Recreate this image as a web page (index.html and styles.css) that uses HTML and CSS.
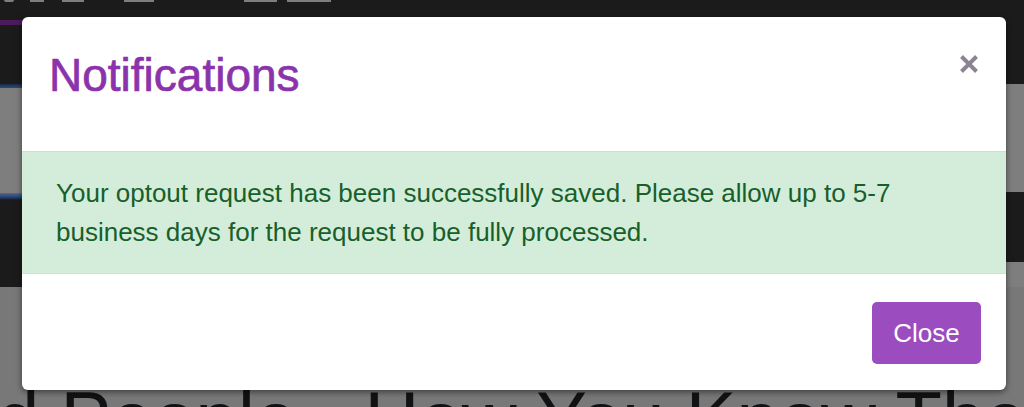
FILE: index.html
```html
<!DOCTYPE html>
<html lang="en">
<head>
<meta charset="utf-8">
<title>Notifications</title>
<link rel="stylesheet" href="styles.css">
</head>
<body>
<div class="page">
  <div class="top-band">
    <div class="hero-bits">
      <span class="bit b1"></span><span class="bit b2"></span><span class="bit b3"></span><span class="bit b4"></span><span class="bit b5"></span><span class="bit b6"></span>
    </div>
    <div class="purple-rule"></div>
  </div>
  <div class="mid">
    <div class="col-left">
      <div class="blue-rule"></div>
      <div class="gray g1"></div>
      <div class="blue-rule thick"></div>
      <div class="dark d1"></div>
    </div>
    <div class="col-right">
      <div class="gray g2"></div>
      <div class="dark d2"></div>
      <div class="gray g3"></div>
    </div>
  </div>
  <div class="bottom">
    <div class="headline">d People - How You Know The</div>
  </div>
</div>

<div class="modal">
  <div class="modal-header">
    <h4 class="modal-title">Notifications</h4>
    <button class="close" type="button" aria-label="Close">
      <svg width="18" height="18" viewBox="0 0 18 18"><path d="M1.5 1.5 L16.5 16.5 M16.5 1.5 L1.5 16.5" stroke="#8b8393" stroke-width="4" fill="none"/></svg>
    </button>
  </div>
  <div class="alert">Your optout request has been successfully saved. Please allow up to 5-7 business days for the request to be fully processed.</div>
  <div class="modal-footer">
    <button class="btn" type="button">Close</button>
  </div>
</div>
</body>
</html>
```

FILE: styles.css
```css
* { box-sizing: border-box; }
html, body { margin: 0; padding: 0; }
body {
  width: 1024px;
  height: 407px;
  overflow: hidden;
  font-family: "Liberation Sans", Arial, sans-serif;
  background: #7b7b7b;
}
.page {
  height: 407px;
  display: flex;
  flex-direction: column;
}
.top-band {
  height: 84px;
  background: #1b1b1b;
  display: flex;
  flex-direction: column;
}
.hero-bits {
  display: flex;
  height: 3px;
}
.bit { display: block; height: 2px; background: #7e7e7e; }
.b1 { width: 10px; margin-left: 4px; border-radius: 0 0 6px 6px; }
.b2 { width: 14px; margin-left: 16px; }
.b3 { width: 22px; margin-left: 18px; }
.b4 { width: 30px; margin-left: 40px; }
.b5 { width: 33px; margin-left: 90px; }
.b6 { width: 44px; margin-left: 10px; }
.purple-rule {
  margin-top: 17px;
  width: 300px;
  height: 5px;
  background: #4a1c5c;
}
.mid {
  display: flex;
  height: 203px;
}
.col-left, .col-right {
  flex: 1;
  display: flex;
  flex-direction: column;
}
.blue-rule {
  height: 4px;
  background: linear-gradient(#1b2a44, #2b4c7e);
}
.blue-rule.thick { height: 7px; background: linear-gradient(#556a8a, #23417a 60%, #1b1b1b); }
.gray { background: #7e7e7e; }
.dark { background: #1b1b1b; }
.g1 { height: 105px; }
.d1 { flex: 1; }
.g2 { height: 108px; }
.d2 { height: 70px; }
.g3 { flex: 1; }
.bottom {
  flex: 1;
  background: #787878;
  padding-top: 94px;
  overflow: hidden;
}
.headline {
  font-family: "Liberation Sans", Arial, sans-serif;
  font-size: 76px;
  line-height: 76px;
  color: #111214;
  white-space: nowrap;
  margin-left: -3px;
}

.modal {
  position: absolute;
  left: 22px;
  top: 17px;
  width: 984px;
  height: 373px;
  background: #fff;
  border-radius: 6px;
  box-shadow: 0 2px 6px rgba(0, 0, 0, 0.5);
  display: flex;
  flex-direction: column;
  overflow: hidden;
}
.modal-header {
  display: flex;
  justify-content: space-between;
  align-items: flex-start;
  padding: 31px 28px 0 27px;
  height: 134px;
}
.modal-title {
  margin: 0;
  font-family: "Liberation Sans", Arial, sans-serif;
  font-weight: normal;
  font-size: 46px;
  line-height: 55px;
  color: #8a33ab;
  -webkit-text-stroke: 0.7px #8a33ab;
}
.close {
  margin: 7px 0 0 0;
  padding: 0;
  border: 0;
  background: none;
  width: 18px;
  height: 18px;
  display: block;
}
.close svg { display: block; }
.alert {
  background: #d4edda;
  border-top: 1px solid #c3e6cb;
  border-bottom: 1px solid #c8e6ce;
  color: #17602a;
  font-size: 26px;
  line-height: 39px;
  padding: 22px 34px 21px 34px;
}
.modal-footer {
  flex: 1;
  display: flex;
  justify-content: flex-end;
  align-items: flex-start;
  padding: 28px 25px 0 0;
}
.btn {
  font-family: "Liberation Sans", Arial, sans-serif;
  font-size: 26px;
  line-height: 40px;
  padding: 11px 21px;
  width: 109px;
  height: 62px;
  color: #fff;
  background: #9b4cbe;
  border: 0;
  border-radius: 5px;
}
```
